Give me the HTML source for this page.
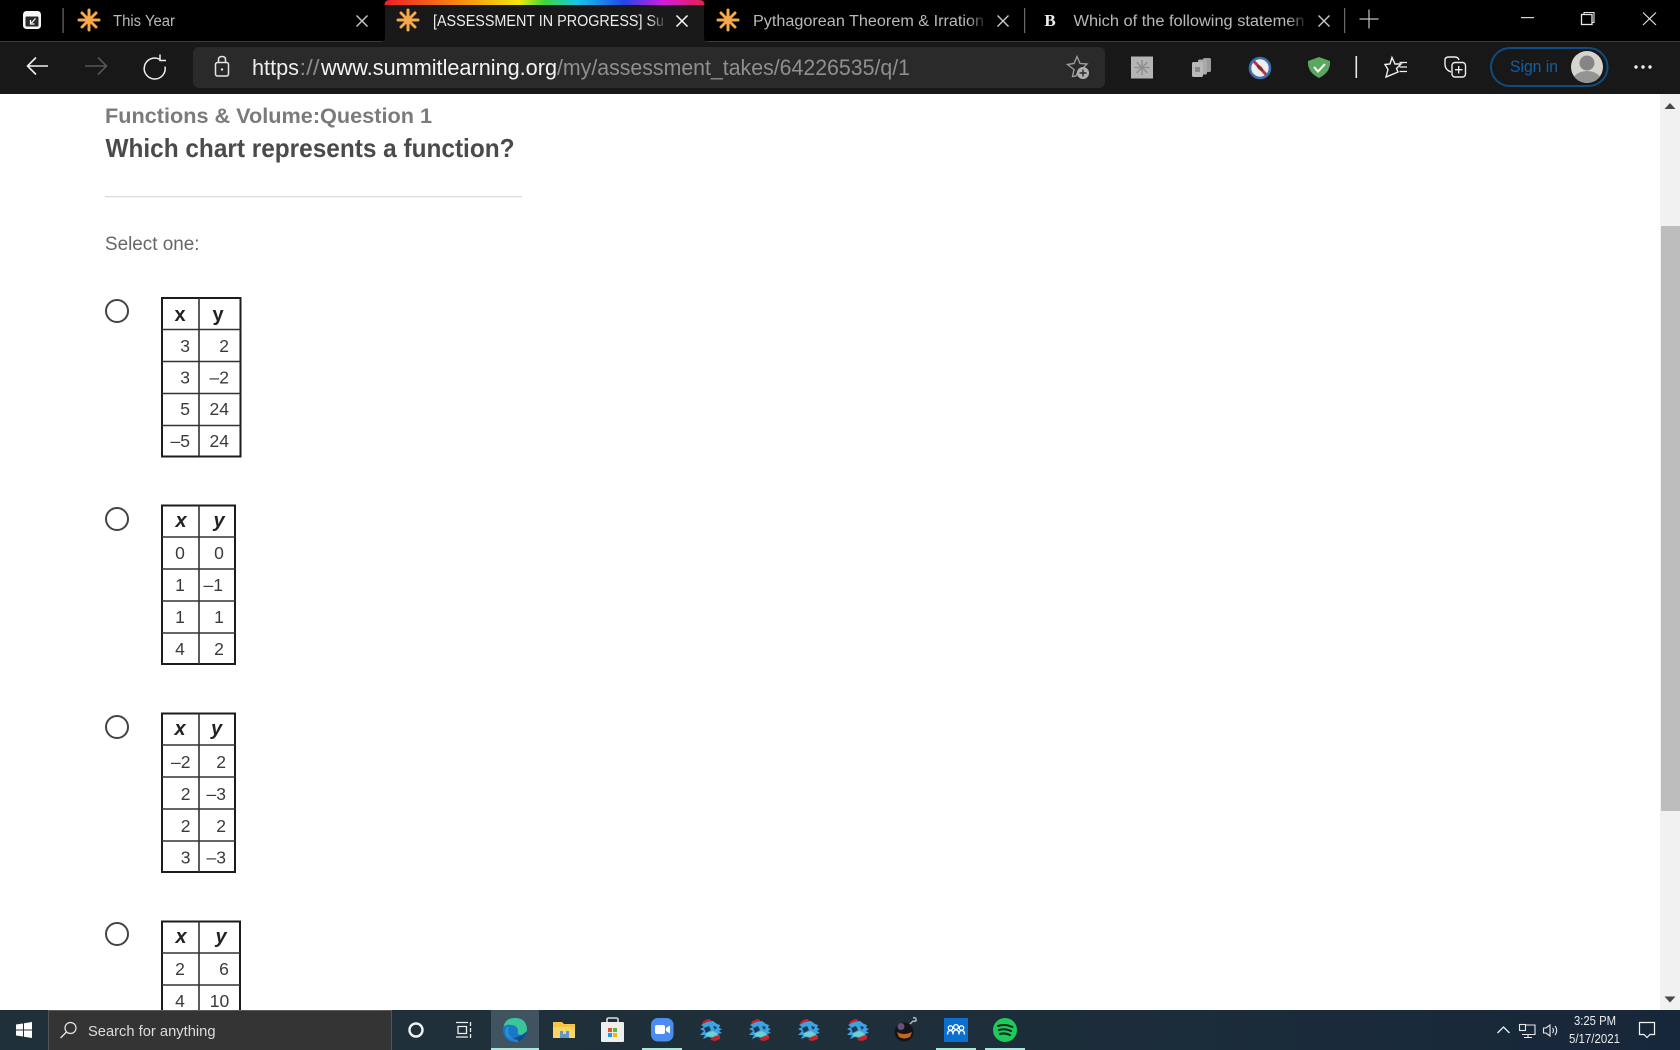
<!DOCTYPE html>
<html>
<head>
<meta charset="utf-8">
<title>Summit Learning Assessment</title>
<style>
html,body{margin:0;padding:0;background:#fff;width:1680px;height:1050px;overflow:hidden}
svg{display:block;position:absolute;left:0;top:0}
text{font-family:"Liberation Sans",sans-serif}
.cell{font-size:17.5px;fill:#3a3a3a}
.hd{font-size:20px;font-weight:bold;fill:#222}
.hi{font-size:20px;font-weight:bold;font-style:italic;fill:#222}
.tab{font-size:15.5px}
.ln{stroke:#333;stroke-width:1.6;fill:none}
.ol{stroke:#1c1c1c;stroke-width:2;fill:#fff}
.radio{fill:#fff;stroke:#444;stroke-width:2}
</style>
</head>
<body>
<svg width="1680" height="1050" viewBox="0 0 1680 1050" xmlns="http://www.w3.org/2000/svg">
<defs>
<linearGradient id="rb" x1="0" x2="1" y1="0" y2="0">
<stop offset="0" stop-color="#e8202a"/><stop offset=".2" stop-color="#f77a12"/><stop offset=".42" stop-color="#f4e80e"/><stop offset=".5" stop-color="#3fd63a"/><stop offset=".6" stop-color="#18c8e8"/><stop offset=".75" stop-color="#2244e8"/><stop offset=".87" stop-color="#d01ce0"/><stop offset="1" stop-color="#e8204a"/>
</linearGradient>
<linearGradient id="fadeA" x1="0" x2="1" y1="0" y2="0"><stop offset="0" stop-color="#191919" stop-opacity="0"/><stop offset="1" stop-color="#191919"/></linearGradient>
<linearGradient id="fadeB" x1="0" x2="1" y1="0" y2="0"><stop offset="0" stop-color="#000" stop-opacity="0"/><stop offset="1" stop-color="#000"/></linearGradient>
<linearGradient id="tb" x1="0" x2="1" y1="0" y2="0"><stop offset="0" stop-color="#203039"/><stop offset=".5" stop-color="#1e2f3a"/><stop offset="1" stop-color="#17273a"/></linearGradient>
<g id="sum" stroke="#f6a84a" stroke-width="3" stroke-linecap="round">
<line x1="0" y1="-10" x2="0" y2="10"/><line x1="-10" y1="0" x2="10" y2="0"/><line x1="-7" y1="-7" x2="7" y2="7"/><line x1="-7" y1="7" x2="7" y2="-7"/>
</g>
<g id="xmark" stroke="#c8c8c8" stroke-width="1.4" fill="none"><line x1="-5.5" y1="-5.5" x2="5.5" y2="5.5"/><line x1="-5.5" y1="5.5" x2="5.5" y2="-5.5"/></g>
<g id="dragon">
<path d="M-9 -7 Q-6 -11 -1 -11 L1 -8 L-4 -6 L-7 -4Z" fill="#c8232c"/>
<path d="M-10 -5 L-4 -8 L2 -9 L6 -6 L9 -5 L8 -2 L11 -1 L8 1 L11 3 L7 4 L9 7 L4 7 L1 8 L-3 7 L-8 9 L-6 5 L-11 5 L-7 1 L-11 -1 L-7 -3 Z" fill="#3fa3e2"/>
<path d="M-5 3 L2 1 L7 4 L2 7 L-5 6Z" fill="#6fd0cc"/>
<path d="M-7 -2 L-2 -4 L0 0 L-5 3Z" fill="#123a5c"/>
<path d="M2 -4 L6 -3 L4 0Z" fill="#123a5c"/>
<path d="M2 7 L9 5 L9 9 L4 11 L-1 10Z" fill="#c8232c"/>
</g>
<clipPath id="av"><circle cx="1587" cy="67" r="16"/></clipPath>
</defs>

<!-- page -->
<rect x="0" y="94" width="1680" height="916" fill="#fff"/>
<text x="105" y="123" font-size="21.4" font-weight="bold" fill="#7b7b7b" textLength="327" lengthAdjust="spacingAndGlyphs">Functions &amp; Volume:Question 1</text>
<text x="105.5" y="157" font-size="25.7" font-weight="bold" fill="#4a4a4a" textLength="409" lengthAdjust="spacingAndGlyphs">Which chart represents a function?</text>
<rect x="105" y="196" width="417" height="1.3" fill="#dcdcdc"/>
<text x="105" y="250" font-size="19" fill="#666" textLength="94.5" lengthAdjust="spacingAndGlyphs">Select one:</text>

<circle class="radio" cx="117" cy="311" r="11"/>
<circle class="radio" cx="117" cy="519" r="11"/>
<circle class="radio" cx="117" cy="727" r="11"/>
<circle class="radio" cx="117" cy="934" r="11"/>

<!-- table 1 -->
<rect class="ol" x="162" y="298" width="78.5" height="158.5"/>
<path class="ln" d="M199 298V456.5M162 329.5H240.5M162 361.5H240.5M162 393.5H240.5M162 425.5H240.5"/>
<text class="hd" x="180" y="321" text-anchor="middle">x</text>
<text class="hd" x="218" y="321" text-anchor="middle">y</text>
<text class="cell" x="190" y="352" text-anchor="end">3</text><text class="cell" x="229" y="352" text-anchor="end">2</text>
<text class="cell" x="190" y="383.5" text-anchor="end">3</text><text class="cell" x="229" y="383.5" text-anchor="end">–2</text>
<text class="cell" x="190" y="415" text-anchor="end">5</text><text class="cell" x="229" y="415" text-anchor="end">24</text>
<text class="cell" x="190" y="447" text-anchor="end">–5</text><text class="cell" x="229" y="447" text-anchor="end">24</text>

<!-- table 2 -->
<rect class="ol" x="162" y="505.5" width="73" height="158.5"/>
<path class="ln" d="M199 505.5V664M162 537H235M162 569H235M162 601H235M162 633H235"/>
<text class="hi" x="181" y="527" text-anchor="middle">x</text>
<text class="hi" x="219" y="527" text-anchor="middle">y</text>
<text class="cell" x="180" y="559" text-anchor="middle">0</text><text class="cell" x="219" y="559" text-anchor="middle">0</text>
<text class="cell" x="180" y="591" text-anchor="middle">1</text><text class="cell" x="223" y="591" text-anchor="end">–1</text>
<text class="cell" x="180" y="623" text-anchor="middle">1</text><text class="cell" x="219" y="623" text-anchor="middle">1</text>
<text class="cell" x="180" y="655" text-anchor="middle">4</text><text class="cell" x="219" y="655" text-anchor="middle">2</text>

<!-- table 3 -->
<rect class="ol" x="162" y="713.5" width="73" height="158.5"/>
<path class="ln" d="M199 713.5V872M162 745H235M162 777H235M162 809H235M162 841H235"/>
<text class="hi" x="180" y="735" text-anchor="middle">x</text>
<text class="hi" x="216.5" y="735" text-anchor="middle">y</text>
<text class="cell" x="190.5" y="768" text-anchor="end">–2</text><text class="cell" x="226" y="768" text-anchor="end">2</text>
<text class="cell" x="190.5" y="800" text-anchor="end">2</text><text class="cell" x="226" y="800" text-anchor="end">–3</text>
<text class="cell" x="190.5" y="832" text-anchor="end">2</text><text class="cell" x="226" y="832" text-anchor="end">2</text>
<text class="cell" x="190.5" y="863.5" text-anchor="end">3</text><text class="cell" x="226" y="863.5" text-anchor="end">–3</text>

<!-- table 4 -->
<rect class="ol" x="162" y="921.5" width="78" height="120"/>
<path class="ln" d="M199 921.5V1042M162 953H240M162 985H240M162 1017H240"/>
<text class="hi" x="181" y="943" text-anchor="middle">x</text>
<text class="hi" x="221" y="943" text-anchor="middle">y</text>
<text class="cell" x="180" y="975" text-anchor="middle">2</text><text class="cell" x="224" y="975" text-anchor="middle">6</text>
<text class="cell" x="180" y="1007" text-anchor="middle">4</text><text class="cell" x="219.5" y="1007" text-anchor="middle">10</text>

<!-- scrollbar -->
<rect x="1660" y="94" width="20" height="916" fill="#f1f1f1"/>
<rect x="1661" y="226" width="19" height="585" fill="#bdbdbd"/>
<path d="M1664.5 109L1670 103L1675.5 109Z" fill="#484848"/>
<path d="M1664.5 996.5L1670 1002.5L1675.5 996.5Z" fill="#484848"/>

<!-- tab strip -->
<rect x="0" y="0" width="1680" height="41" fill="#000"/>
<rect x="0" y="41" width="1680" height="1.2" fill="#3c3c3c"/>
<rect x="0" y="42" width="1680" height="52" fill="#181818"/>

<!-- active tab -->
<path d="M380 42Q385 42 385 37V4H704V37Q704 42 709 42Z" fill="#191919"/>
<path d="M384.5 5Q384.5 0 389.5 0H699.5Q704.5 0 704.5 5Z" fill="url(#rb)"/>

<!-- panel icon -->
<rect x="23" y="11" width="18" height="18" rx="3.5" fill="#f6f6f6"/>
<rect x="25.5" y="16.5" width="13" height="10" rx="1" fill="#2a2a2a"/>
<path d="M35.5 18.5L31.5 23M30.5 20V24H34.5" stroke="#f6f6f6" stroke-width="1.3" fill="none"/>
<rect x="62.5" y="8" width="1.2" height="25" fill="#6a6a6a"/>

<use href="#sum" x="89" y="20"/>
<text class="tab" x="113" y="26" fill="#b9b9b9" textLength="62" lengthAdjust="spacingAndGlyphs">This Year</text>
<use href="#xmark" x="362" y="21"/>

<use href="#sum" x="408" y="20"/>
<text class="tab" x="433" y="26" fill="#ededed" textLength="231" lengthAdjust="spacingAndGlyphs">[ASSESSMENT IN PROGRESS] Su</text>
<rect x="648" y="8" width="20" height="26" fill="url(#fadeA)"/>
<g stroke="#fff" stroke-width="1.5" fill="none"><line x1="676.5" y1="15.5" x2="687.5" y2="26.5"/><line x1="676.5" y1="26.5" x2="687.5" y2="15.5"/></g>

<use href="#sum" x="728" y="20"/>
<text class="tab" x="753" y="26" fill="#b9b9b9" textLength="231" lengthAdjust="spacingAndGlyphs">Pythagorean Theorem &amp; Irration</text>
<rect x="968" y="8" width="20" height="26" fill="url(#fadeB)"/>
<use href="#xmark" x="1003" y="21"/>
<rect x="1024" y="8" width="1.2" height="25" fill="#6a6a6a"/>

<text x="1050" y="26" font-size="17" font-weight="bold" fill="#eee" text-anchor="middle" style="font-family:'Liberation Serif',serif">B</text>
<text class="tab" x="1073.5" y="26" fill="#b9b9b9" textLength="231" lengthAdjust="spacingAndGlyphs">Which of the following statemen</text>
<rect x="1288" y="8" width="20" height="26" fill="url(#fadeB)"/>
<use href="#xmark" x="1324" y="21"/>
<rect x="1344" y="8" width="1.2" height="25" fill="#6a6a6a"/>
<path d="M1369 9.5V28.5M1359.5 19H1378.5" stroke="#c4c4c4" stroke-width="1.2" fill="none"/>

<!-- window controls -->
<rect x="1521" y="17" width="13" height="1.2" fill="#d8d8d8"/>
<rect x="1581.5" y="14.5" width="10.5" height="10" fill="none" stroke="#e8e8e8" stroke-width="1.3"/>
<path d="M1584 14V12.5H1594V22.5H1592" fill="none" stroke="#e8e8e8" stroke-width="1.1"/>
<path d="M1643 12.5L1656 25M1656 12.5L1643 25" stroke="#e0e0e0" stroke-width="1.2" fill="none"/>

<!-- toolbar -->
<path d="M48 66H28M36 57.5L27.5 66L36 74.5" fill="none" stroke="#f0f0f0" stroke-width="1.6"/>
<path d="M85 66H106M98 57.5L106.5 66L98 74.5" fill="none" stroke="#555" stroke-width="1.6"/>
<path d="M159.5 59.2A10.5 10.5 0 1 0 165 66.5M160 54.5V60.5H166" fill="none" stroke="#eee" stroke-width="1.5"/>

<rect x="193" y="47" width="912" height="41" rx="6" fill="#2a2a2a"/>
<rect x="215.5" y="62.5" width="13" height="13.5" rx="2" fill="none" stroke="#e6e6e6" stroke-width="1.5"/>
<path d="M218.5 62.5V59.5Q218.5 56.5 222 56.5Q225.5 56.5 225.5 59.5V62.5" fill="none" stroke="#e6e6e6" stroke-width="1.5"/>
<circle cx="222" cy="69.5" r="1.2" fill="#e6e6e6"/>

<text x="252" y="75" font-size="22" fill="#ececec" textLength="47" lengthAdjust="spacingAndGlyphs">https</text>
<text x="299.5" y="75" font-size="22" fill="#8a8a8a" textLength="20" lengthAdjust="spacingAndGlyphs">://</text>
<text x="321" y="75" font-size="22" fill="#f4f4f4" textLength="236" lengthAdjust="spacingAndGlyphs">www.summitlearning.org</text>
<text x="557" y="75" font-size="22" fill="#8f8f8f" textLength="353" lengthAdjust="spacingAndGlyphs">/my/assessment_takes/64226535/q/1</text>

<!-- favorite add -->
<path d="M1077 56.5L1080 63.5L1087 64L1082 69L1078 71.5L1076 76L1072.5 76.5L1074 69.5L1067.5 64.5L1074 63.5Z" fill="none" stroke="#9b9b9b" stroke-width="1.4"/>
<circle cx="1083" cy="73" r="6" fill="#b0b0b0"/>
<path d="M1083 69.5V76.5M1079.5 73H1086.5" stroke="#2a2a2a" stroke-width="1.4"/>

<!-- ext1 -->
<rect x="1131" y="56.5" width="22" height="22" fill="#b5b5b5"/>
<g stroke="#8f8f8f" stroke-width="1.5" stroke-linecap="round"><line x1="1142" y1="60.5" x2="1142" y2="74.5"/><line x1="1135" y1="67.5" x2="1149" y2="67.5"/><line x1="1137" y1="62.5" x2="1147" y2="72.5"/><line x1="1137" y1="72.5" x2="1147" y2="62.5"/></g>
<!-- ext2 -->
<rect x="1203" y="58" width="8" height="14" rx="1.5" fill="#9a9a9a"/>
<rect x="1198" y="59.5" width="9" height="15" rx="1.5" fill="#aaa"/>
<rect x="1192" y="62" width="11" height="15" rx="1.5" fill="#b8b8b8"/>
<rect x="1195" y="67" width="5" height="5" fill="#8a8a8a"/>
<!-- ext3 -->
<circle cx="1260" cy="68" r="10" fill="#f0eded" stroke="#3b6fb0" stroke-width="2.6"/>
<line x1="1254" y1="61.5" x2="1266" y2="74.5" stroke="#c8323a" stroke-width="3"/>
<ellipse cx="1260" cy="68" rx="4" ry="2" fill="#333" transform="rotate(40 1260 68)" opacity=".55"/>
<!-- ext4 shield -->
<path d="M1319 57L1330 61Q1331 72 1319 78Q1307 72 1308 61Z" fill="#5aa85f"/>
<path d="M1314 67L1318 71.5L1325 64" fill="none" stroke="#fff" stroke-width="2"/>
<rect x="1355.5" y="56" width="1.6" height="22" fill="#e8e8e8"/>

<!-- favorites -->
<path d="M1392 57.5L1395 64H1401L1396.5 68.5L1398 72L1386 77L1388 69.5L1385 64.5L1390 64Z" fill="none" stroke="#f0f0f0" stroke-width="1.4"/>
<path d="M1399.5 62.5H1407M1399.5 67H1407M1399.5 71.5H1407" stroke="#f0f0f0" stroke-width="1.3"/>
<!-- collections -->
<path d="M1451 72Q1445.5 70 1445 65V60Q1445 57 1449 57L1455 57Q1458 57 1459 60" fill="none" stroke="#eee" stroke-width="1.4"/>
<rect x="1452" y="62.5" width="13.5" height="14.5" rx="3" fill="#181818" stroke="#eee" stroke-width="1.4"/>
<path d="M1458.7 66V73.5M1455 69.7H1462.5" stroke="#eee" stroke-width="1.3"/>

<!-- sign in -->
<rect x="1491" y="48" width="116.5" height="38" rx="19" fill="none" stroke="#0f4c81" stroke-width="2"/>
<text x="1510" y="72" font-size="17" fill="#12609f" textLength="48" lengthAdjust="spacingAndGlyphs">Sign in</text>
<circle cx="1587" cy="67" r="16" fill="#d6d4cf"/>
<g clip-path="url(#av)">
<circle cx="1587" cy="63" r="7.5" fill="#858585"/>
<ellipse cx="1587" cy="82" rx="15" ry="11" fill="#949494"/>
</g>
<circle cx="1636" cy="67" r="1.7" fill="#eee"/><circle cx="1643" cy="67" r="1.7" fill="#eee"/><circle cx="1650" cy="67" r="1.7" fill="#eee"/>

<!-- taskbar -->
<rect x="0" y="1010" width="1680" height="40" fill="url(#tb)"/>
<g fill="#fff">
<path d="M16 1024.5L23 1023.5V1029.5H16Z"/><path d="M24 1023.3L32 1022V1029.5H24Z"/>
<path d="M16 1030.5H23V1036.5L16 1035.5Z"/><path d="M24 1030.5H32V1038L24 1036.7Z"/>
</g>
<rect x="48" y="1010" width="344" height="40" fill="#343434"/>
<rect x="48" y="1010" width="344" height="1" fill="#5a5a5a"/>
<rect x="48" y="1010" width="1" height="40" fill="#555"/><rect x="391" y="1010" width="1" height="40" fill="#555"/>
<circle cx="70.5" cy="1028" r="5.5" fill="none" stroke="#e8e8e8" stroke-width="1.2"/>
<line x1="66.5" y1="1032" x2="60.5" y2="1038" stroke="#e8e8e8" stroke-width="1.3"/>
<text x="88" y="1036" font-size="15" fill="#dcdcdc" textLength="127.5" lengthAdjust="spacingAndGlyphs">Search for anything</text>

<circle cx="416" cy="1030" r="6.5" fill="none" stroke="#f2f2f2" stroke-width="2.4"/>
<path d="M456 1022.5H468M456 1037H468M458 1026.5H466.5V1033.5H458ZM470.5 1022V1026M470.5 1028V1032M470.5 1034V1038" fill="none" stroke="#eee" stroke-width="1.3"/>

<rect x="491" y="1010" width="48" height="40" fill="#3f5360"/>
<rect x="491" y="1048" width="48" height="2" fill="#a8e8d8"/>
<circle cx="515" cy="1030" r="12" fill="#1a78c8"/>
<path d="M503.5 1027Q505 1018 515 1018Q526 1018 527 1029Q527 1035 521 1035Q517 1035 518 1031Q518 1026 512 1025Q506 1024 503.5 1027Z" fill="#3cc49a"/>
<path d="M527 1031Q525 1040 517 1042Q511 1042 508 1037Q513 1040 519 1036Q523 1035 527 1031Z" fill="#0f4c94"/>
<path d="M508 1027Q505 1033 509 1037Q513 1041 518 1041" fill="none" stroke="#2aa0e8" stroke-width="2.5" opacity=".7"/>

<!-- explorer -->
<path d="M553 1022H562L564 1024H575V1038H553Z" fill="#f4c642"/>
<rect x="553" y="1027" width="22" height="11" fill="#f7d566"/>
<rect x="560" y="1031" width="9" height="7" fill="#5f9ac8"/>
<rect x="563" y="1031" width="3" height="3" fill="#f7d566"/>

<!-- store -->
<path d="M607 1022V1019.5Q607 1018 609 1018H616Q618 1018 618 1019.5V1022" fill="none" stroke="#ddd" stroke-width="1.6"/>
<rect x="601" y="1022" width="23" height="20" rx="1" fill="#efefef"/>
<rect x="608" y="1028" width="4" height="4" fill="#e8542a"/><rect x="613" y="1028" width="4" height="4" fill="#6ab42c"/>
<rect x="608" y="1033" width="4" height="4" fill="#1e9be8"/><rect x="613" y="1033" width="4" height="4" fill="#f4b800"/>

<!-- zoom -->
<rect x="651" y="1018" width="22.5" height="23.5" rx="7" fill="#4b8cf0"/>
<rect x="655" y="1025" width="10" height="9" rx="2" fill="#fff"/>
<path d="M666 1028L670 1025.5V1033.5L666 1031Z" fill="#fff"/>
<rect x="642" y="1048" width="40" height="2" fill="#a8e8d8"/>

<!-- dragons -->
<use href="#dragon" x="711" y="1030"/>
<use href="#dragon" x="760" y="1030"/>
<use href="#dragon" x="809" y="1030"/>
<use href="#dragon" x="858" y="1030"/>

<!-- bomb -->
<circle cx="904" cy="1032" r="9.5" fill="#151518"/>
<path d="M897 1032Q904 1036 912 1032L910 1037Q904 1040 899 1037Z" fill="#c8641e"/>
<circle cx="901" cy="1026.5" r="3.5" fill="#6a4f7c"/>
<path d="M910 1024L913 1021Q917 1022 916 1019Q915 1017 913 1018" fill="none" stroke="#bbb" stroke-width="1.4"/>

<!-- blue people -->
<rect x="944" y="1018" width="24" height="24" fill="#0b6fd0"/>
<g fill="none" stroke="#fff" stroke-width="1.3">
<circle cx="950.5" cy="1028" r="2.2"/><circle cx="956" cy="1027" r="2.4"/><circle cx="961.5" cy="1028" r="2.2"/>
<path d="M947.5 1034.5Q947.5 1030.5 950.5 1030.5Q953 1030.5 953 1034.5M953 1034.5Q953 1030 956 1030Q959 1030 959 1034.5M959 1034.5Q959 1030.5 961.5 1030.5Q964.5 1030.5 964.5 1034.5"/>
</g>
<rect x="936" y="1048" width="40" height="2" fill="#a8e8d8"/>

<!-- spotify -->
<circle cx="1005" cy="1030" r="12" fill="#1ecb5a"/>
<path d="M998 1026Q1005 1023.5 1012.5 1027M999 1030Q1005 1028 1011 1031M1000 1034Q1005 1032.5 1010 1035" fill="none" stroke="#12261a" stroke-width="2" stroke-linecap="round"/>
<rect x="985" y="1048" width="40" height="2" fill="#a8e8d8"/>

<!-- tray -->
<path d="M1497.5 1033L1503.5 1027L1509.5 1033" fill="none" stroke="#f0f0f0" stroke-width="1.3"/>
<path d="M1523 1025H1535V1034.5H1522M1528 1034.5V1037M1524 1037.5H1532" fill="none" stroke="#e8e8e8" stroke-width="1.1"/>
<rect x="1519.5" y="1024.5" width="6" height="6" fill="#1b2c3a" stroke="#e8e8e8" stroke-width="1.1"/>
<path d="M1543.5 1028H1546L1550 1025V1036L1546 1033H1543.5Z" fill="none" stroke="#e8e8e8" stroke-width="1.1"/>
<path d="M1552.5 1028Q1554.5 1030.5 1552.5 1033M1555 1026Q1558.5 1030.5 1555 1035" fill="none" stroke="#e8e8e8" stroke-width="1.1"/>
<text x="1574" y="1025" font-size="13" fill="#ececec" textLength="42" lengthAdjust="spacingAndGlyphs">3:25 PM</text>
<text x="1569" y="1043" font-size="13" fill="#ececec" textLength="51" lengthAdjust="spacingAndGlyphs">5/17/2021</text>
<path d="M1639.5 1022.5H1654.5V1034.5H1650L1647 1037.5L1644 1034.5H1639.5Z" fill="none" stroke="#f2f2f2" stroke-width="1.2"/>
</svg>
</body>
</html>
